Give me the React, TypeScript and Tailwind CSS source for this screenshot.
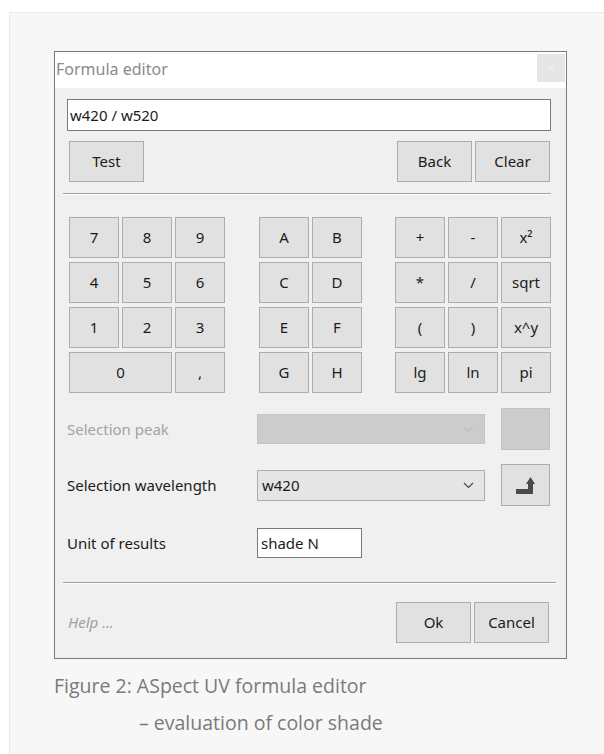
const KEYS_NUM = [
  ['7', '8', '9'],
  ['4', '5', '6'],
  ['1', '2', '3'],
];
const KEYS_VAR = [
  ['A', 'B'],
  ['C', 'D'],
  ['E', 'F'],
  ['G', 'H'],
];
const KEYS_OP = [
  ['+', '-', 'x²'],
  ['*', '/', 'sqrt'],
  ['(', ')', 'x^y'],
  ['lg', 'ln', 'pi'],
];

const btn =
  'flex items-center justify-center bg-[#e1e1e1] border border-[#adadad] text-[#1b1b1b] text-[15px]';

function Key({ label, wide }: { label: string; wide?: boolean }) {
  return <div className={`${btn} h-[41px] ${wide ? 'w-[103px]' : 'w-[50px]'}`}>{label}</div>;
}

function Chevron({ color }: { color: string }) {
  return (
    <svg width="11" height="7" viewBox="0 0 11 7" fill="none">
      <path d="M1 1l4.5 4.5L10 1" stroke={color} strokeWidth="1.2" />
    </svg>
  );
}

export default function App() {
  return (
    <div className="min-h-[754px] bg-white pt-[12px] pl-[9px] font-['Noto_Sans','Open_Sans',sans-serif]">
      <div className="h-[742px] bg-[#f7f7f7] border-t border-l border-[#e9e9e9] pt-[38px] pl-[44px]">
        {/* dialog window */}
        <div className="w-[513px] border border-[#7a7a7a] bg-[#f0f0f0]">
          <div className="flex items-start justify-between bg-white h-[36px]">
            <span className="pl-[1px] pt-[7px] text-[16px] text-[#8a8a8a] leading-[20px]">Formula editor</span>
            <div className="mt-[2px] mr-[1px] w-[28px] h-[28px] bg-[#e6e6e6] flex items-center justify-center text-[#f4f4f4] text-[12px]">
              ×
            </div>
          </div>

          <div className="pl-[12px] pr-[15px] pt-[11px] pb-[15px]">
            <div className="h-[32px] bg-white border border-[#7a7a7a] flex items-center px-[2px] text-[15px] text-[#1b1b1b]">
              w420 / w520
            </div>

            <div className="flex mt-[10px] pl-[2px]">
              <div className={`${btn} w-[75px] h-[41px]`}>Test</div>
              <div className="flex-1" />
              <div className={`${btn} w-[75px] h-[41px]`}>Back</div>
              <div className={`${btn} w-[75px] h-[41px] ml-[3px] mr-[1px]`}>Clear</div>
            </div>

            <div className="mt-[11px] -ml-[4px] border-t border-[#a0a0a0] border-b border-b-white" />

            {/* keypad */}
            <div className="flex mt-[22px] pl-[2px] gap-[34px]">
              <div className="flex flex-col gap-[4px]">
                {KEYS_NUM.map((row) => (
                  <div key={row.join()} className="flex gap-[3px]">
                    {row.map((k) => (
                      <Key key={k} label={k} />
                    ))}
                  </div>
                ))}
                <div className="flex gap-[3px]">
                  <Key label="0" wide />
                  <Key label="," />
                </div>
              </div>
              <div className="flex flex-col gap-[4px]">
                {KEYS_VAR.map((row) => (
                  <div key={row.join()} className="flex gap-[3px]">
                    {row.map((k) => (
                      <Key key={k} label={k} />
                    ))}
                  </div>
                ))}
              </div>
              <div className="flex flex-col gap-[4px] -ml-[1px]">
                {KEYS_OP.map((row) => (
                  <div key={row.join()} className="flex gap-[3px]">
                    {row.map((k) => (
                      <Key key={k} label={k} />
                    ))}
                  </div>
                ))}
              </div>
            </div>

            {/* selection peak (disabled) */}
            <div className="flex items-center mt-[15px] h-[42px]">
              <span className="w-[190px] text-[15px] text-[#a3a3a3]">Selection peak</span>
              <div className="w-[228px] h-[30px] bg-[#cccccc] border border-[#c4c4c4] flex items-center justify-end pr-[10px]">
                <Chevron color="#bdbdbd" />
              </div>
              <div className="ml-[16px] w-[49px] h-[42px] bg-[#cccccc] border border-[#c2c2c2]" />
            </div>

            {/* selection wavelength */}
            <div className="flex items-center mt-[14px] h-[42px]">
              <span className="w-[190px] text-[15px] text-[#1b1b1b]">Selection wavelength</span>
              <div className="w-[228px] h-[31px] bg-[#e5e5e5] border border-[#adadad] flex items-center justify-between pl-[4px] pr-[10px] text-[15px] text-[#1b1b1b]">
                w420
                <Chevron color="#4a4a4a" />
              </div>
              <div className={`${btn} ml-[16px] w-[49px] h-[42px]`}>
                <svg width="20" height="17" viewBox="0 0 20 17">
                  <path d="M0 12H12V7H10L14.5 0L19 7H17V17H0Z" fill="#4a4a4a" />
                </svg>
              </div>
            </div>

            {/* unit */}
            <div className="flex items-center mt-[22px] h-[30px]">
              <span className="w-[190px] text-[15px] text-[#1b1b1b]">Unit of results</span>
              <div className="w-[105px] h-[30px] bg-white border border-[#7a7a7a] flex items-center px-[3px] text-[15px] text-[#1b1b1b]">
                shade N
              </div>
            </div>

            <div className="mt-[24px] -ml-[4px] mr-[-5px] border-t border-[#a0a0a0] border-b border-b-white" />

            <div className="flex items-center mt-[18px]">
              <span className="pl-[1px] text-[15px] italic text-[#a0a0a0]">Help ...</span>
              <div className="flex-1" />
              <div className={`${btn} w-[75px] h-[41px]`}>Ok</div>
              <div className={`${btn} w-[75px] h-[41px] ml-[3px] mr-[2px]`}>Cancel</div>
            </div>
          </div>
        </div>

        <div className="mt-[8px] text-[19.5px] leading-[37px] text-[#7a7a7a] font-['Open_Sans',sans-serif]">
          <div>Figure 2: ASpect UV formula editor</div>
          <div className="pl-[85px]">– evaluation of color shade</div>
        </div>
      </div>
    </div>
  );
}
